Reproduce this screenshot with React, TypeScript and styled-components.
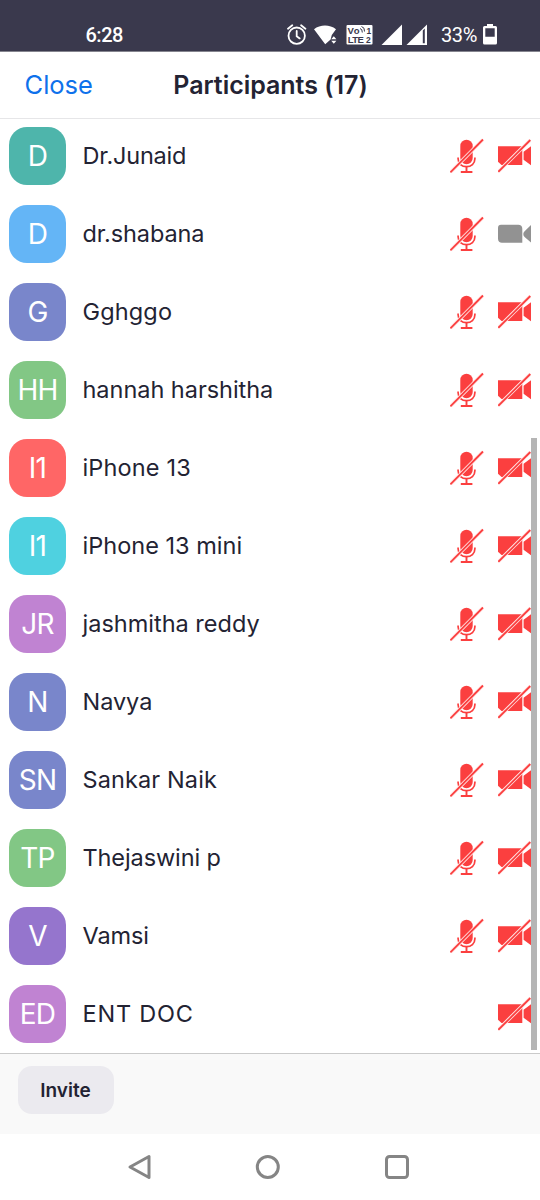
import React from 'react';
import styled, { createGlobalStyle } from 'styled-components';

const GlobalStyle = createGlobalStyle`
  * { box-sizing: border-box; }
  body { margin: 0; background: #fff; }
`;

const Screen = styled.div`
  position: relative;
  width: 540px;
  height: 1200px;
  display: flex;
  flex-direction: column;
  overflow: hidden;
  background: #fff;
  color: #232333;
  font-family: Inter, 'Liberation Sans', sans-serif;
`;

const StatusBar = styled.header`
  flex: none;
  height: 52px;
  padding: 19px 43px 0 85.5px;
  display: flex;
  align-items: flex-start;
  justify-content: space-between;
  background: #3a394d;
  border-bottom: 1px solid #85858f;
  color: #fff;
  font-family: Roboto, sans-serif;
  font-size: 20px;
  line-height: 32px;
`;

const Clock = styled.span`
  font-weight: 500;
  letter-spacing: -0.5px;
`;

const StatusIcons = styled.svg`
  display: block;
  width: 140px;
  height: 28px;
`;

const StatusGroup = styled.div`
  display: flex;
  align-items: flex-start;
`;

const Battery = styled.span`
  width: 36px;
  margin-left: 14px;
  margin-right: 6px;
  letter-spacing: -0.4px;
  white-space: nowrap;
`;

const BatteryIcon = styled.svg`
  display: block;
  width: 14px;
  height: 28px;
`;

const TitleBar = styled.div`
  flex: none;
  height: 67px;
  display: grid;
  grid-template-columns: 1fr auto 1fr;
  align-items: center;
  padding: 0 23.5px 1px 24.5px;
  border-bottom: 1px solid #e6e6e8;
`;

const CloseButton = styled.button`
  justify-self: start;
  border: 0;
  padding: 0;
  background: none;
  color: #0e71eb;
  font: 400 25.5px/32px Inter, sans-serif;
`;

const Title = styled.h1`
  margin: 0;
  font: 600 25px/32px Inter, sans-serif;
  letter-spacing: -0.03px;
`;

const List = styled.ul`
  flex: 1;
  min-height: 0;
  margin: 0;
  padding: 0;
  list-style: none;
  display: flex;
  flex-direction: column;
  justify-content: flex-end;
  overflow: hidden;
`;

const Row = styled.li`
  flex: none;
  height: 78px;
  padding: 0 9px;
  display: flex;
  align-items: center;
`;

const Avatar = styled.div<{ $color: string }>`
  flex: none;
  width: 57px;
  height: 58px;
  border-radius: 18px;
  display: flex;
  align-items: center;
  justify-content: center;
  background: ${(p) => p.$color};
  color: #fff;
  font-size: 28px;
  line-height: 58px;
  letter-spacing: -0.8px;
  white-space: nowrap;
`;

const Name = styled.span<{ $tracking: number }>`
  flex: 1;
  margin-left: 16.5px;
  font-size: 23.5px;
  line-height: 30px;
  letter-spacing: ${(p) => p.$tracking}px;
  white-space: nowrap;
`;

const Devices = styled.div`
  flex: none;
  display: flex;
  gap: 14px;
`;

const DeviceIcon = styled.svg`
  display: block;
  width: 34px;
  height: 36px;
  &:last-child { width: 33px; }
`;

const ScrollThumb = styled.div`
  position: absolute;
  right: 3px;
  top: 438px;
  width: 6px;
  height: 612px;
  background: #b5b5b5;
`;

const Footer = styled.footer`
  flex: none;
  height: 81px;
  padding: 12px 17.5px;
  background: #f9f9f9;
  border-top: 1px solid #cacaca;
`;

const InviteButton = styled.button`
  width: 96px;
  height: 48px;
  border: 0;
  border-radius: 14px;
  padding: 1px 0 0;
  background: #ebeaef;
  color: #232333;
  font: 600 19px/47px Inter, sans-serif;
`;

const NavBar = styled.nav`
  flex: none;
  height: 66px;
  padding: 0 130px 0 126px;
  display: flex;
  align-items: center;
  justify-content: space-between;
`;

const NavIcon = styled.svg`
  display: block;
  width: 26px;
  height: 26px;
  fill: none;
  stroke: #858585;
  stroke-width: 3;
  stroke-linejoin: round;
`;

const RED = '#fb3f3f';

const MicOff = () => (
  <DeviceIcon viewBox="0 0 34 36">
    <rect x="10.3" y="1.8" width="12.4" height="24.5" rx="6.2" fill={RED} />
    <path d="M8.1 19.5v1.3c0 4.9 3.7 7.9 8.4 7.9s8.400-3 8.400-7.900v-1.300" fill="none" stroke={RED} strokeWidth="1.7" />
    <path d="M16.5 28.700v4.500M10.800 34h11.600" stroke={RED} strokeWidth="1.900" fill="none" />
    <path d="M0.8 33.900L32.800 1.700" stroke="#ffe9e9" strokeWidth="3.600" />
    <path d="M0.400 34.300L33 1.500" stroke={RED} strokeWidth="1.800" />
  </DeviceIcon>
);

const VideoOff = () => (
  <DeviceIcon viewBox="0 0 33 36">
    <path d="M0 8.300h24.300v18.800H3.500L0 23.800z" fill={RED} />
    <path d="M25.600 13.800L33 8.300v19l-7.400-5.500z" fill={RED} />
    <path d="M0.500 33.500L32 2.200" stroke="#ffe9e9" strokeWidth="3.600" />
    <path d="M0.300 33.800L32.300 2" stroke={RED} strokeWidth="1.800" />
  </DeviceIcon>
);

const VideoOn = () => (
  <DeviceIcon viewBox="0 0 33 36">
    <path d="M3 8.800h17.300c2.400 0 4 1.600 4 4v14H4c-2.400 0-4-1.600-4-4V11.800c0-2 1-3 3-3z" fill="#929292" />
    <path d="M33 9.100v17.400l-6.400-5.600c-1.700-1.500-1.700-4.200 0-5.700z" fill="#929292" />
  </DeviceIcon>
);

interface Person {
  name: string;
  initials: string;
  color: string;
  tracking: number;
  mic?: boolean;
  videoOn?: boolean;
}

const people: Person[] = [
  { name: 'Dr.Junaid', initials: 'D', color: '#4eb5ab', tracking: -0.2 },
  { name: 'dr.shabana', initials: 'D', color: '#64b5f6', tracking: -0.1, videoOn: true },
  { name: 'Gghggo', initials: 'G', color: '#7986cb', tracking: 0.15 },
  { name: 'hannah harshitha', initials: 'HH', color: '#82c785', tracking: -0.03 },
  { name: 'iPhone 13', initials: 'I1', color: '#ff6666', tracking: 0.15 },
  { name: 'iPhone 13 mini', initials: 'I1', color: '#4fd1e0', tracking: 0.02 },
  { name: 'jashmitha reddy', initials: 'JR', color: '#c083d2', tracking: 0 },
  { name: 'Navya', initials: 'N', color: '#7986cb', tracking: -0.05 },
  { name: 'Sankar Naik', initials: 'SN', color: '#7986cb', tracking: 0.12 },
  { name: 'Thejaswini p', initials: 'TP', color: '#82c785', tracking: -0.1 },
  { name: 'Vamsi', initials: 'V', color: '#9575cd', tracking: -0.1 },
  { name: 'ENT DOC', initials: 'ED', color: '#c083d2', tracking: 0.8, mic: false },
];

export default function App() {
  return (
    <Screen>
      <GlobalStyle />
      <StatusBar>
        <Clock>6:28</Clock>
        <StatusGroup>
          <StatusIcons viewBox="287 19 140 28">
            <g fill="none" stroke="#fff" strokeWidth="1.8" strokeLinecap="round">
              <circle cx="296.7" cy="35.7" r="8.2" />
              <path d="M296.7 31v5.2l3 2.2M288 28.8l4.3-3.5M305.4 28.8l-4.3-3.5" />
            </g>
            <path d="M314 29.200c6.200-5 15.800-5 22 0l-4.200 5.800-1.200 4.400-5.400 4.800z" fill="#fff" />
            <path d="M331.200 39.200l2.600-3 2.600 3zM331.200 40.700l2.600 3 2.600-3z" fill="#fff" />
            <rect x="346.500" y="25" width="26" height="19.500" rx="1" fill="#fff" />
            <g fill="#3a394d" fontFamily="Liberation Sans, sans-serif" fontWeight="700">
              <text x="347.500" y="33.800" fontSize="9.500" textLength="12">Vo</text>
              <text x="347.800" y="43.300" fontSize="9.500" textLength="16">LTE</text>
              <text x="366.500" y="33.500" fontSize="8.500">1</text>
              <text x="366" y="43.300" fontSize="8.500">2</text>
            </g>
            <path d="M360 28.500q2.500.5 2.300 4M361.500 26.500q3.500 1 3 5" fill="none" stroke="#3a394d" strokeWidth="1" />
            <path d="M402 24.500V45h-20.500z" fill="#fff" />
            <path d="M427 24.500V45h-20.500zM422.800 30.500v12.700h2V28.500z" fill="#fff" fillRule="evenodd" />
          </StatusIcons>
          <Battery>33%</Battery>
          <BatteryIcon viewBox="483 19 14 28">
            <path d="M487 24h6v2h2.500q1.500 0 1.500 1.500v15.500q0 1.500-1.500 1.500h-11q-1.500 0-1.500-1.500v-15.500q0-1.500 1.500-1.500h2.500zM485.300 28.300v8.500h9.400v-8.500z" fill="#fff" fillRule="evenodd" />
          </BatteryIcon>
        </StatusGroup>
      </StatusBar>
      <TitleBar>
        <CloseButton>Close</CloseButton>
        <Title>Participants (17)</Title>
      </TitleBar>
      <List>
        {people.map((p) => (
          <Row key={p.name}>
            <Avatar $color={p.color}>{p.initials}</Avatar>
            <Name $tracking={p.tracking}>{p.name}</Name>
            <Devices>
              {p.mic !== false && <MicOff />}
              {p.videoOn ? <VideoOn /> : <VideoOff />}
            </Devices>
          </Row>
        ))}
      </List>
      <ScrollThumb />
      <Footer>
        <InviteButton>Invite</InviteButton>
      </Footer>
      <NavBar>
        <NavIcon viewBox="0 0 26 26"><path d="M23 2.500v21L4 13z" /></NavIcon>
        <NavIcon viewBox="0 0 26 26"><circle cx="12.800" cy="13" r="10.500" /></NavIcon>
        <NavIcon viewBox="0 0 26 26"><rect x="2.500" y="2.500" width="21" height="21" rx="3" /></NavIcon>
      </NavBar>
    </Screen>
  );
}
